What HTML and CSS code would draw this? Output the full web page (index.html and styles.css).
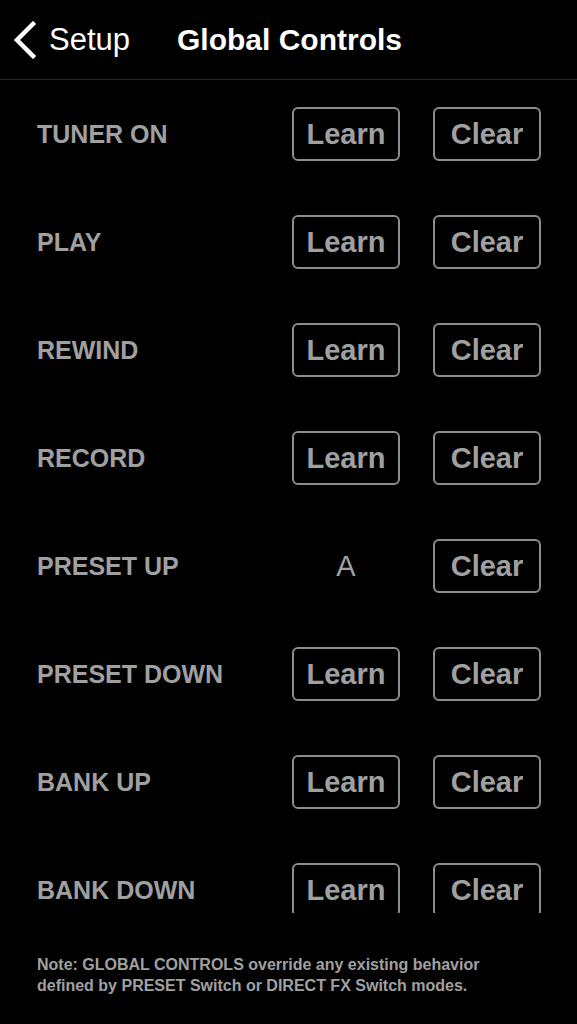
FILE: index.html
```html
<!DOCTYPE html>
<html lang="en">
<head>
  <meta charset="UTF-8">
  <meta name="viewport" content="width=device-width, initial-scale=1.0">
  <title>Global Controls</title>
  <link rel="stylesheet" href="styles.css">
</head>
<body>

<header class="nav">
  <a class="back" href="#">
    <svg class="chevron" width="24" height="38" viewBox="0 0 24 38">
      <polyline points="20,3 4,19 20,35" fill="none" stroke="#fff" stroke-width="4.5" stroke-linecap="square"/>
    </svg>
    <span>Setup</span>
  </a>
  <h1 class="title">Global Controls</h1>
</header>

<div class="list">
  <div class="row">
    <span class="label">TUNER ON</span>
    <button class="btn">Learn</button>
    <button class="btn">Clear</button>
  </div>
  <div class="row">
    <span class="label">PLAY</span>
    <button class="btn">Learn</button>
    <button class="btn">Clear</button>
  </div>
  <div class="row">
    <span class="label">REWIND</span>
    <button class="btn">Learn</button>
    <button class="btn">Clear</button>
  </div>
  <div class="row">
    <span class="label">RECORD</span>
    <button class="btn">Learn</button>
    <button class="btn">Clear</button>
  </div>
  <div class="row">
    <span class="label">PRESET UP</span>
    <span class="assigned">A</span>
    <button class="btn">Clear</button>
  </div>
  <div class="row">
    <span class="label">PRESET DOWN</span>
    <button class="btn">Learn</button>
    <button class="btn">Clear</button>
  </div>
  <div class="row">
    <span class="label">BANK UP</span>
    <button class="btn">Learn</button>
    <button class="btn">Clear</button>
  </div>
  <div class="row">
    <span class="label">BANK DOWN</span>
    <button class="btn">Learn</button>
    <button class="btn">Clear</button>
  </div>
</div>

<p class="note">
  Note: GLOBAL CONTROLS override any existing behavior<br>
  defined by PRESET Switch or DIRECT FX Switch modes.
</p>

</body>
</html>
```

FILE: styles.css
```css
body {
  margin: 0;
  padding: 0;
  background-color: #000;
  color: #fff;
  font-family: "Liberation Sans", Arial, sans-serif;
  width: 577px;
  height: 1024px;
  overflow: hidden;
}
.nav {
  display: flex;
  align-items: center;
  height: 79px;
  border-bottom: 1px solid #262626;
}
.back {
  display: flex;
  align-items: center;
  color: #fff;
  text-decoration: none;
  font-size: 31px;
  padding-left: 13px;
}
.chevron {
  margin-right: 12px;
  margin-top: 1px;
}
.title {
  margin: 0 0 0 47px;
  font-size: 30px;
  font-weight: bold;
}
.list {
  height: 833px;
  overflow: hidden;
}
.row {
  display: grid;
  grid-template-columns: 222px 108px 108px;
  column-gap: 33px;
  align-items: center;
  height: 108px;
  padding-left: 37px;
}
.label {
  font-size: 25px;
  font-weight: bold;
  color: #a0a0a0;
  white-space: nowrap;
}
.btn {
  height: 54px;
  border: 2px solid #8c8c8c;
  border-radius: 6px;
  background: #000;
  color: #a0a0a0;
  font-family: "Liberation Sans", Arial, sans-serif;
  font-size: 29px;
  font-weight: bold;
  padding: 0;
}
.assigned {
  text-align: center;
  font-size: 29px;
  color: #a0a0a0;
}
.note {
  margin: 41px 0 0 37px;
  font-size: 16px;
  line-height: 21px;
  font-weight: bold;
  color: #a0a0a0;
}
```
